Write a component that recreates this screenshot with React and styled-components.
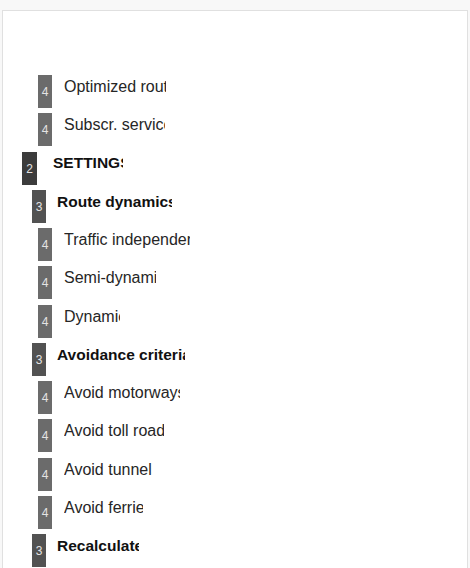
import React from "react";
import styled, { createGlobalStyle } from "styled-components";

const Global = createGlobalStyle`
  html, body {
    margin: 0;
    padding: 0;
    background: #f8f8f8;
  }
  body {
    font-family: "Liberation Sans", Arial, sans-serif;
  }
`;

const Page = styled.div`
  width: 470px;
  height: 568px;
  overflow: hidden;
  padding-top: 10px;
  padding-left: 2px;
  box-sizing: border-box;
`;

const Panel = styled.div`
  width: 466px;
  min-height: 600px;
  box-sizing: border-box;
  background: #ffffff;
  border: 1px solid #e0e0e0;
  border-bottom: none;
  padding-top: 64px;
`;

const Tree = styled.ul`
  list-style: none;
  margin: 0;
  padding: 0;
  display: flex;
  flex-direction: column;
  gap: 5.25px;
`;

const indent = { 2: 19, 3: 29, 4: 35 };
const labelGap = { 2: 16, 3: 11, 4: 12 };
const tone = { 2: "#3c3c3c", 3: "#525252", 4: "#6b6b6b" };

const Row = styled.li`
  display: flex;
  align-items: flex-start;
  height: 33px;
  padding-left: ${(p) => indent[p.$level]}px;
`;

const Badge = styled.span`
  flex: none;
  width: ${(p) => (p.$level === 2 ? 15 : 14)}px;
  height: 33px;
  display: flex;
  align-items: center;
  justify-content: center;
  padding-top: 1px;
  box-sizing: border-box;
  background: ${(p) => tone[p.$level]};
  color: #e4e4e4;
  font-size: 12px;
  line-height: 1;
`;

const Label = styled.span`
  display: block;
  margin-left: ${(p) => labelGap[p.$level]}px;
  padding-top: ${(p) => (p.$level === 2 ? 1 : 2)}px;
  width: ${(p) => p.$clip}px;
  overflow: hidden;
  white-space: nowrap;
  font-size: ${(p) => (p.$level === 4 ? 16 : 15.5)}px;
  line-height: 19px;
  font-weight: ${(p) => (p.$level === 4 ? 400 : 700)};
  color: ${(p) => (p.$level === 4 ? "#262626" : "#111111")};
`;

const items = [
  { level: 4, text: "Optimized route", clip: 102 },
  { level: 4, text: "Subscr. services", clip: 101 },
  { level: 2, text: "SETTINGS", clip: 70 },
  { level: 3, text: "Route dynamics", clip: 115 },
  { level: 4, text: "Traffic independent", clip: 126 },
  { level: 4, text: "Semi-dynamic", clip: 92 },
  { level: 4, text: "Dynamic", clip: 56 },
  { level: 3, text: "Avoidance criteria", clip: 128 },
  { level: 4, text: "Avoid motorways", clip: 116 },
  { level: 4, text: "Avoid toll roads", clip: 100 },
  { level: 4, text: "Avoid tunnels", clip: 88 },
  { level: 4, text: "Avoid ferries", clip: 79 },
  { level: 3, text: "Recalculate", clip: 82 },
];

export default function App() {
  return (
    <>
      <Global />
      <Page>
        <Panel>
          <Tree>
            {items.map((it, i) => (
              <Row key={i} $level={it.level}>
                <Badge $level={it.level}>{it.level}</Badge>
                <Label $level={it.level} $clip={it.clip}>
                  {it.text}
                </Label>
              </Row>
            ))}
          </Tree>
        </Panel>
      </Page>
    </>
  );
}
